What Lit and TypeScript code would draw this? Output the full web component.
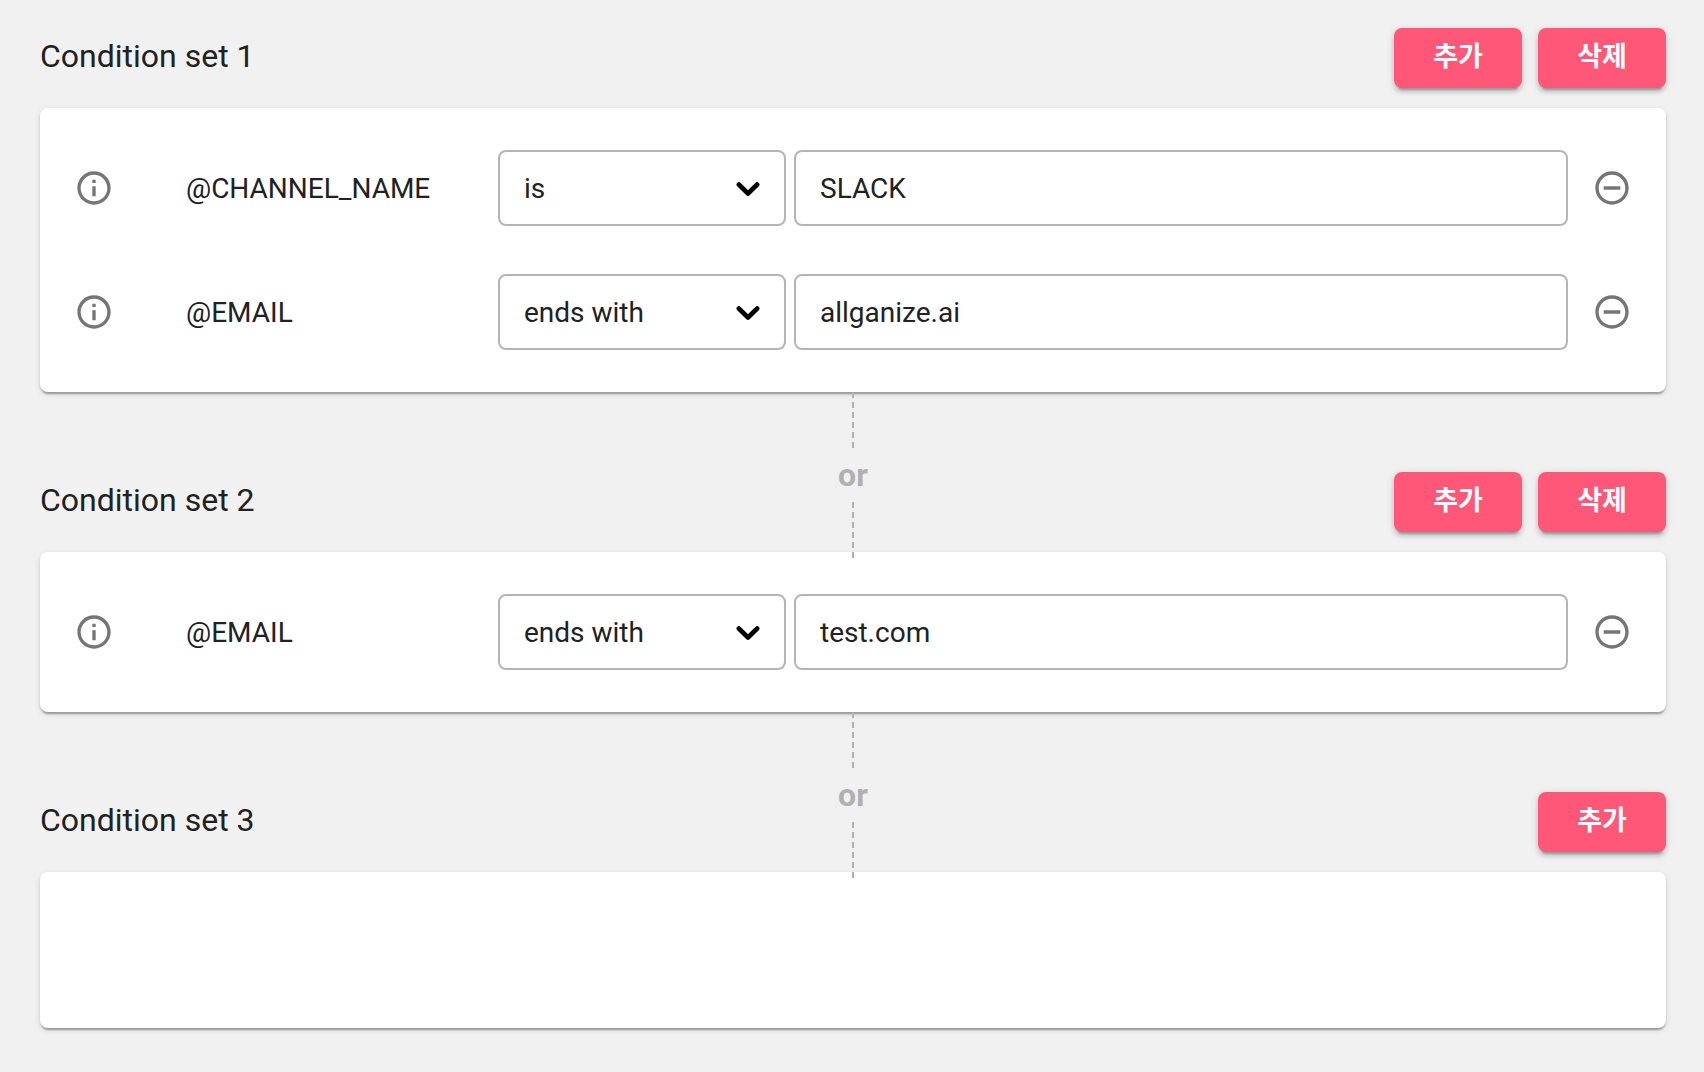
import { LitElement, html, css, nothing } from "lit";
import { customElement, property, state } from "lit/decorators.js";

type Operator = "is" | "ends with";

interface Condition {
  name: string;
  operator: Operator;
  value: string;
}

interface ConditionSet {
  title: string;
  removable: boolean;
  conditions: Condition[];
}

const OPERATORS: Operator[] = ["is", "ends with"];

@customElement("condition-row")
class ConditionRow extends LitElement {
  @property({ attribute: false }) condition!: Condition;

  static styles = css`
    :host {
      display: grid;
      grid-template-columns: 40px 384px 288px minmax(0, 1fr) 40px;
      align-items: center;
      padding: 24px 34px;
      color: #212121;
      font-size: 28px;
      line-height: 37px;
    }
    .info,
    .remove {
      display: flex;
      color: #757575;
    }
    .remove {
      margin: 0;
      padding: 0;
      border: 0;
      background: none;
      cursor: pointer;
    }
    .icon {
      width: 40px;
      height: 40px;
      fill: currentColor;
    }
    .name {
      padding-left: 72px;
      white-space: nowrap;
    }
    .picker {
      display: grid;
      align-items: center;
    }
    .select,
    .value {
      display: block;
      box-sizing: border-box;
      width: 100%;
      height: 76px;
      margin: 0;
      padding: 0 24px;
      border: 2px solid #b5b5b5;
      border-radius: 8px;
      background: #fff;
      color: inherit;
      font: inherit;
      outline: none;
    }
    .select {
      grid-area: 1 / 1;
      appearance: none;
      cursor: pointer;
    }
    .chevron {
      grid-area: 1 / 1;
      justify-self: end;
      width: 24px;
      height: 16px;
      margin-right: 26px;
      fill: none;
      stroke: #000;
      stroke-width: 4.6;
      stroke-linecap: round;
      stroke-linejoin: round;
      pointer-events: none;
    }
    .select:focus-visible,
    .value:focus-visible {
      border-color: #ff5777;
    }
    .value-cell {
      padding: 0 24px 0 8px;
    }
  `;

  render() {
    const { name, operator, value } = this.condition;
    return html`
      <span class="info">
        <svg class="icon" viewBox="0 0 24 24" aria-hidden="true">
          <path
            d="M11 7h2v2h-2zm0 4h2v6h-2zm1-9C6.480 2 2 6.480 2 12s4.480 10 10 10 10-4.480 10-10S17.520 2 12 2zm0 18c-4.410 0-8-3.590-8-8s3.590-8 8-8 8 3.590 8 8-3.590 8-8 8z"
          />
        </svg>
      </span>
      <label class="name" for="value">${name}</label>
      <div class="picker">
        <select class="select" aria-label="${name} operator">
          ${OPERATORS.map(
            (o) => html`<option ?selected=${o === operator}>${o}</option>`
          )}
        </select>
        <svg class="chevron" viewBox="0 0 24 16" aria-hidden="true">
          <path d="M2.800 4.500l9.200 9 9.200-9" />
        </svg>
      </div>
      <div class="value-cell">
        <input class="value" id="value" type="text" .value=${value} />
      </div>
      <button
        class="remove"
        type="button"
        aria-label="Remove ${name}"
        @click=${() => this.dispatchEvent(new CustomEvent("remove"))}
      >
        <svg class="icon" viewBox="0 0 24 24" aria-hidden="true">
          <path
            d="M7 11v2h10v-2H7zm5-9C6.480 2 2 6.480 2 12s4.480 10 10 10 10-4.480 10-10S17.520 2 12 2zm0 18c-4.410 0-8-3.590-8-8s3.590-8 8-8 8 3.590 8 8-3.590 8-8 8z"
          />
        </svg>
      </button>
    `;
  }
}

@customElement("app-root")
class AppRoot extends LitElement {
  @state() private sets: ConditionSet[] = [
    {
      title: "Condition set 1",
      removable: true,
      conditions: [
        { name: "@CHANNEL_NAME", operator: "is", value: "SLACK" },
        { name: "@EMAIL", operator: "ends with", value: "allganize.ai" },
      ],
    },
    {
      title: "Condition set 2",
      removable: true,
      conditions: [{ name: "@EMAIL", operator: "ends with", value: "test.com" }],
    },
    { title: "Condition set 3", removable: false, conditions: [] },
  ];

  static styles = css`
    :host {
      display: block;
      box-sizing: border-box;
      min-height: 100vh;
      padding: 28px 38px 44px 40px;
      background: #f1f1f1;
      color: #212121;
      font-family: Roboto, "Noto Sans CJK KR", sans-serif;
    }
    .header {
      display: grid;
      grid-template-columns: 1fr auto 1fr;
      align-items: end;
    }
    .title {
      grid-column: 1;
      margin: 0;
      padding-bottom: 34px;
      font-size: 32px;
      font-weight: 400;
      line-height: 36px;
    }
    .joint {
      grid-column: 2;
      z-index: 1;
      display: flex;
      flex-direction: column;
      align-items: center;
      margin-bottom: -6px;
      color: #b0b0b0;
      font-size: 32px;
      font-weight: 700;
      line-height: 54px;
    }
    .line {
      width: 2px;
      height: 56px;
      background: repeating-linear-gradient(#b0b0b0 0 6px, transparent 6px 10px);
    }
    .actions {
      grid-column: 3;
      display: flex;
      justify-content: flex-end;
      gap: 16px;
      padding-bottom: 20px;
    }
    .action {
      width: 128px;
      height: 60px;
      padding: 0 0 2px;
      border: 0;
      border-radius: 8px;
      background: #ff5777;
      box-shadow:
        0 6px 2px -4px rgba(0, 0, 0, 0.2),
        0 4px 4px 0 rgba(0, 0, 0, 0.14),
        0 2px 10px 0 rgba(0, 0, 0, 0.12);
      color: #fff;
      font-family: inherit;
      font-size: 27px;
      font-weight: 700;
      line-height: 36px;
      cursor: pointer;
    }
    .card {
      box-sizing: border-box;
      min-height: 156px;
      padding: 18px 0;
      border-radius: 8px;
      background: #fff;
      box-shadow:
        0 4px 2px -2px rgba(0, 0, 0, 0.2),
        0 2px 2px 0 rgba(0, 0, 0, 0.14),
        0 2px 6px 0 rgba(0, 0, 0, 0.12);
    }
  `;

  private add(index: number) {
    this.sets = this.sets.map((set, i) =>
      i === index
        ? {
            ...set,
            conditions: [
              ...set.conditions,
              { name: "@EMAIL", operator: "is" as Operator, value: "" },
            ],
          }
        : set
    );
  }

  private removeSet(index: number) {
    this.sets = this.sets.filter((_, i) => i !== index);
  }

  private removeCondition(index: number, row: number) {
    this.sets = this.sets.map((set, i) =>
      i === index
        ? { ...set, conditions: set.conditions.filter((_, r) => r !== row) }
        : set
    );
  }

  render() {
    return this.sets.map(
      (set, i) => html`
        <section>
          <header class="header">
            <h2 class="title">${set.title}</h2>
            ${i > 0
              ? html`<div class="joint">
                  <span class="line"></span>
                  <span>or</span>
                  <span class="line"></span>
                </div>`
              : nothing}
            <div class="actions">
              <button class="action" type="button" @click=${() => this.add(i)}>추가</button>
              ${set.removable
                ? html`<button class="action" type="button" @click=${() => this.removeSet(i)}>삭제</button>`
                : nothing}
            </div>
          </header>
          <div class="card">
            ${set.conditions.map(
              (condition, r) => html`<condition-row
                .condition=${condition}
                @remove=${() => this.removeCondition(i, r)}
              ></condition-row>`
            )}
          </div>
        </section>
      `
    );
  }
}
